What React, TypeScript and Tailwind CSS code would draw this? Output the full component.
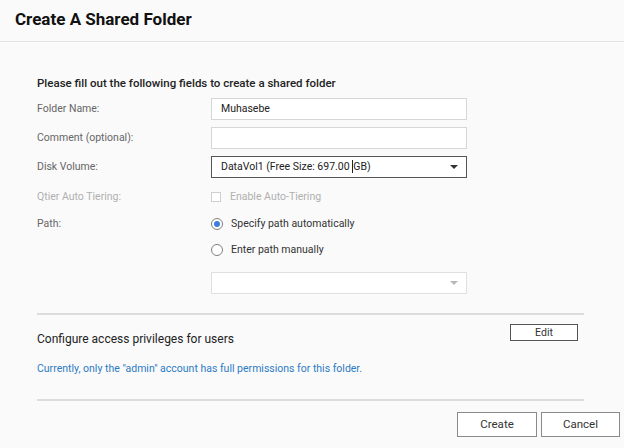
import React from 'react'

const font = { fontFamily: 'Roboto, "Liberation Sans", sans-serif' }

const Caret = ({ color = '#333' }: { color?: string }) => (
  <svg width="8" height="4" viewBox="0 0 8 4">
    <path d="M0 0h8L4 4z" fill={color} />
  </svg>
)

const Row = ({
  label,
  disabled,
  children,
  className,
}: {
  label: string
  disabled?: boolean
  children: React.ReactNode
  className?: string
}) => (
  <div className={`flex h-[22px] items-center ${className ?? ''}`}>
    <div
      className={`w-[174px] shrink-0 text-[10.5px] leading-[14px] ${
        disabled ? 'text-[#b0b0b0]' : 'text-[#666]'
      }`}
    >
      {label}
    </div>
    {children}
  </div>
)

const Radio = ({ checked, label }: { checked?: boolean; label: string }) => (
  <div className="flex items-center gap-[8px]">
    <span className="flex h-[12px] w-[12px] items-center justify-center rounded-full border border-[#808080] bg-white">
      {checked && <span className="h-[6px] w-[6px] rounded-full bg-[#3d7fe0]" />}
    </span>
    <span className="text-[10.5px] leading-[14px] text-[#333]">{label}</span>
  </div>
)

export default function App() {
  return (
    <div className="h-[448px] w-[624px] overflow-hidden bg-[#fafafa] text-[#222]" style={font}>
      <div className="flex h-[42px] items-center border-b border-[#e3e3e3] pl-[15px] pb-[2px]">
        <h1 className="text-[17px] font-bold text-[#111]">Create A Shared Folder</h1>
      </div>

      <div className="pl-[37px] pr-[40px]">
        <h2 className="mt-[34px] text-[11.5px] font-medium leading-[14px] text-[#222]">
          Please fill out the following fields to create a shared folder
        </h2>

        <div className="mt-[8px] flex flex-col">
          <Row label="Folder Name:">
            <div className="flex h-[22px] w-[256px] items-center border border-[#d6d6d6] bg-white px-[9px] text-[10.5px] text-[#222]">
              Muhasebe
            </div>
          </Row>
          <Row label="Comment (optional):" className="mt-[7px]">
            <div className="h-[22px] w-[256px] border border-[#d6d6d6] bg-white" />
          </Row>
          <Row label="Disk Volume:" className="mt-[7px]">
            <div className="flex h-[22px] w-[256px] items-center justify-between border border-[#555] bg-white pl-[9px] pr-[8px] text-[10.5px] text-[#222]">
              <span>
                DataVol1 (Free Size: 697.00{' '}
                <span className="border-l border-[#222]">GB)</span>
              </span>
              <Caret />
            </div>
          </Row>
          <Row label="Qtier Auto Tiering:" disabled className="mt-[8px]">
            <div className="flex items-center gap-[9px]">
              <span className="h-[10px] w-[10px] border border-[#cfcfcf] bg-white" />
              <span className="text-[10.5px] leading-[14px] text-[#b0b0b0]">
                Enable Auto-Tiering
              </span>
            </div>
          </Row>
          <Row label="Path:" className="mt-[5px]">
            <Radio checked label="Specify path automatically" />
          </Row>
          <div className="ml-[174px] mt-[4px] flex h-[22px] items-center">
            <Radio label="Enter path manually" />
          </div>
          <div className="ml-[174px] mt-[11px] flex h-[22px] w-[256px] items-center justify-end border border-[#e0e0e0] bg-white pr-[8px]">
            <Caret color="#b8b8b8" />
          </div>
        </div>

        <div className="mt-[19px] h-[2px] bg-[#dcdcdc]" />

        <div className="mt-[9px] flex items-start justify-between pr-[6px]">
          <span className="mt-[8px] text-[12px] leading-[14px] text-[#222]">
            Configure access privileges for users
          </span>
          <button className="h-[17px] w-[68px] border border-[#555] bg-white text-[10.5px] leading-[14px] text-[#333]">
            Edit
          </button>
        </div>

        <p className="mt-[16px] text-[10.5px] leading-[14px] text-[#2c7bc4]">
          Currently, only the "admin" account has full permissions for this folder.
        </p>

        <div className="mt-[23px] h-[2px] bg-[#dcdcdc]" />
      </div>

      <div className="mt-[11px] flex justify-end gap-[4px] pr-[4px]">
        <button className="h-[25px] w-[80px] border border-[#8a8a8a] bg-white text-[11.5px] text-[#333]">
          Create
        </button>
        <button className="h-[25px] w-[79px] border border-[#8a8a8a] bg-white text-[11.5px] text-[#333]">
          Cancel
        </button>
      </div>
    </div>
  )
}
